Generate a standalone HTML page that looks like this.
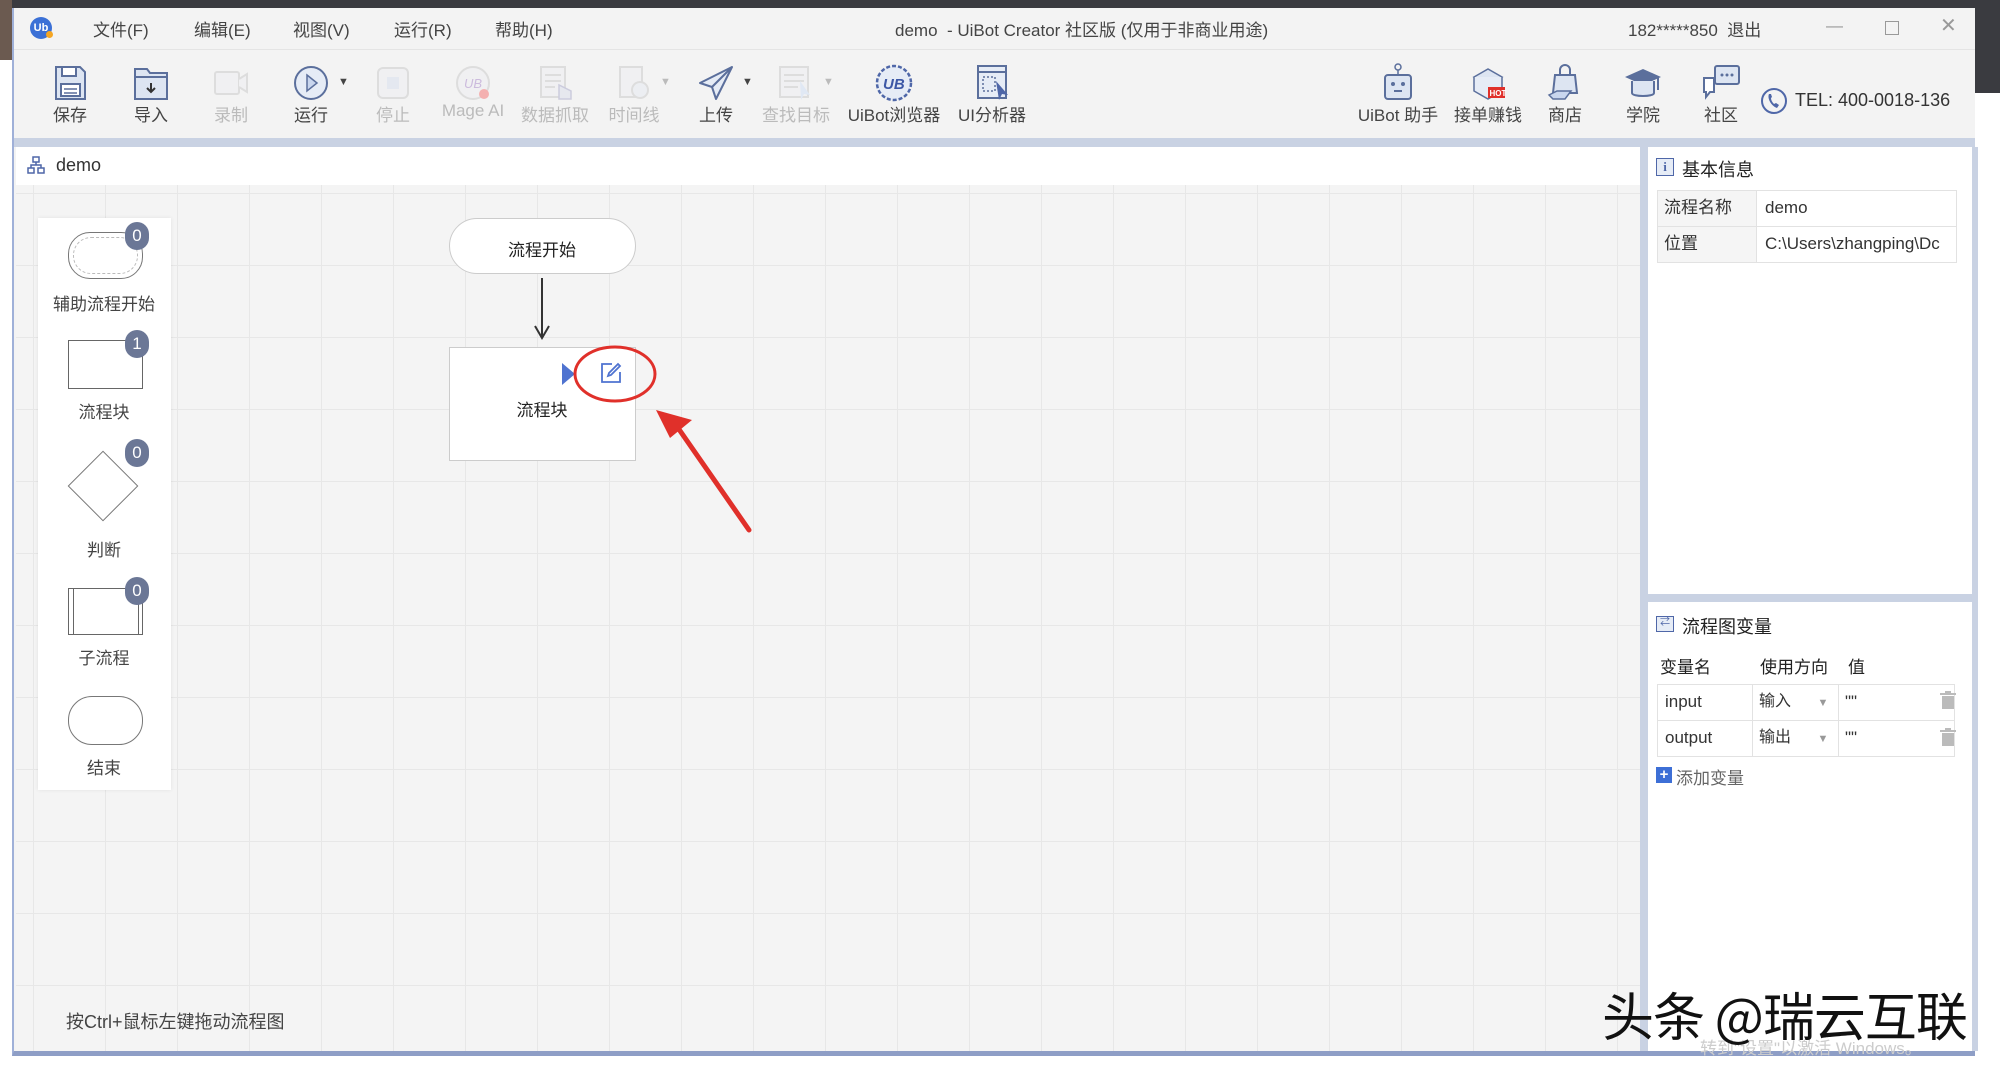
<!DOCTYPE html>
<html><head><meta charset="utf-8"><style>
*{margin:0;padding:0;box-sizing:border-box}
body{width:2000px;height:1065px;overflow:hidden;background:#fff;font-family:"Liberation Sans","Noto Sans CJK SC",sans-serif;color:#333;position:relative}
.a{position:absolute}
.t{position:absolute;white-space:nowrap}
.menu{font-size:17px;color:#444;top:16px}
.lbl{font-size:17px;top:101px;transform:translateX(-50%);color:#444}
.dis{color:#bbb}
.ic{position:absolute;top:63px;width:40px;height:40px}
.pal{font-size:17px;color:#444;transform:translateX(-50%);left:104px}
.badge{position:absolute;width:24px;height:28px;border-radius:12px;background:#6b7796;color:#fff;font-size:17px;text-align:center;line-height:28px}
.cell{position:absolute;border:1px solid #e2e2e2;font-size:17px;padding-left:6px;line-height:34px}
</style></head><body>
<div class="a" style="left:0;top:0;width:2000px;height:8px;background:#3a3b40"></div>
<div class="a" style="left:1975px;top:0;width:25px;height:93px;background:#3a3b40"></div>
<div class="a" style="left:0;top:0;width:12px;height:60px;background:#6b5a50"></div>
<div class="a" style="left:12px;top:8px;width:1963px;height:1048px;background:#f3f3f3;border-left:2px solid #9fb0d8;border-bottom:5px solid #8e9ec6"></div>
<div class="a" style="left:14px;top:8px;width:1961px;height:42px;background:#f3f3f3;border-bottom:1px solid #e4e4e4"></div>
<div class="a" style="left:30px;top:17px;width:22px;height:22px;border-radius:50%;background:#3b70d6;color:#fff;font-size:11px;font-weight:bold;text-align:center;line-height:22px">Ub</div>
<div class="a" style="left:46px;top:31px;width:7px;height:7px;border-radius:50%;background:#f5a623"></div>
<div class="t menu" style="left:93px">文件(F)</div>
<div class="t menu" style="left:194px">编辑(E)</div>
<div class="t menu" style="left:293px">视图(V)</div>
<div class="t menu" style="left:394px">运行(R)</div>
<div class="t menu" style="left:495px">帮助(H)</div>
<div class="t menu" style="left:895px">demo &nbsp;- UiBot Creator 社区版 (仅用于非商业用途)</div>
<div class="t menu" style="left:1628px">182*****850 &nbsp;退出</div>
<div class="t menu" style="left:1826px;color:#999">—</div>
<div class="a" style="left:1885px;top:21px;width:14px;height:14px;border:1px solid #999"></div>
<div class="t menu" style="left:1940px;color:#999;font-size:20px;top:13px">✕</div>
<svg class="ic" style="left:50px" viewBox="0 0 40 40"><path d="M6 4h24l5 5v27H6z" fill="#dde5f2" stroke="#5b6f9c" stroke-width="2"/><rect x="12" y="4" width="14" height="9" fill="#fff" stroke="#5b6f9c" stroke-width="2"/><rect x="11" y="21" width="19" height="12" fill="#fff" stroke="#5b6f9c" stroke-width="2"/><path d="M14 26h13M14 30h13" stroke="#5b6f9c" stroke-width="1.5"/></svg>
<svg class="ic" style="left:131px" viewBox="0 0 40 40"><path d="M4 6h12l3 4h17v26H4z" fill="#dde5f2" stroke="#5b6f9c" stroke-width="2"/><path d="M4 14h32" stroke="#5b6f9c" stroke-width="2"/><path d="M20 20v9M16 25l4 4 4-4" stroke="#333" stroke-width="2" fill="none"/></svg>
<svg class="ic" style="left:211px" viewBox="0 0 40 40"><rect x="4" y="9" width="24" height="22" rx="2" fill="#f0f0f2" stroke="#ddd" stroke-width="2"/><path d="M28 16l8-5v18l-8-5" fill="#f0f0f2" stroke="#ddd" stroke-width="2"/></svg>
<svg class="ic" style="left:291px" viewBox="0 0 40 40"><circle cx="20" cy="20" r="16" fill="#e6ecf6" stroke="#5b6f9c" stroke-width="2"/><path d="M16 12l10 8-10 8z" fill="#c9d6ee" stroke="#5b6f9c" stroke-width="1.5"/></svg>
<div class="t" style="left:338px;top:76px;font-size:11px;color:#444">▼</div>
<svg class="ic" style="left:373px" viewBox="0 0 40 40"><rect x="5" y="5" width="30" height="30" rx="5" fill="#f0f0f2" stroke="#ddd" stroke-width="2"/><rect x="14" y="14" width="12" height="12" fill="#e4e8f0"/></svg>
<svg class="ic" style="left:453px" viewBox="0 0 40 40"><circle cx="20" cy="20" r="16" fill="#f0f0f2" stroke="#ddd" stroke-width="2"/><text x="11" y="25" font-size="13" fill="#cbd" font-style="italic" font-family="Liberation Sans">UB</text><circle cx="31" cy="31" r="5" fill="#f4b0b0"/></svg>
<svg class="ic" style="left:535px" viewBox="0 0 40 40"><rect x="6" y="4" width="24" height="30" fill="#f0f0f2" stroke="#ddd" stroke-width="2"/><path d="M10 12h16M10 18h16M10 24h10" stroke="#ddd" stroke-width="2"/><path d="M24 22v14h12v-8z" fill="#e6e8ee" stroke="#ccd" stroke-width="1.5"/></svg>
<svg class="ic" style="left:614px" viewBox="0 0 40 40"><rect x="6" y="4" width="22" height="30" fill="#f0f0f2" stroke="#ddd" stroke-width="2"/><circle cx="26" cy="27" r="8" fill="#eceef2" stroke="#ddd" stroke-width="2"/></svg>
<div class="t dis" style="left:660px;top:76px;font-size:11px">▼</div>
<svg class="ic" style="left:696px" viewBox="0 0 40 40"><path d="M36 4L4 20l12 4 4 12z" fill="#e6ecf6" stroke="#5b6f9c" stroke-width="2" stroke-linejoin="round"/><path d="M36 4L16 24" stroke="#5b6f9c" stroke-width="2"/></svg>
<div class="t" style="left:742px;top:76px;font-size:11px;color:#444">▼</div>
<svg class="ic" style="left:776px" viewBox="0 0 40 40"><rect x="4" y="4" width="28" height="30" fill="#f0f0f2" stroke="#ddd" stroke-width="2"/><path d="M8 12h20M8 18h20M8 24h14" stroke="#ddd" stroke-width="2"/><path d="M24 18l10 14-6-1-3 6z" fill="#e0e8f4"/></svg>
<div class="t dis" style="left:823px;top:76px;font-size:11px">▼</div>
<svg class="ic" style="left:874px" viewBox="0 0 40 40"><circle cx="20" cy="20" r="17" fill="#e6ecf6" stroke="#4f67a8" stroke-width="2.5" stroke-dasharray="4 2"/><text x="9" y="26" font-size="15" font-weight="bold" fill="#3d58a6" font-style="italic" font-family="Liberation Sans">UB</text></svg>
<svg class="ic" style="left:974px" viewBox="0 0 40 40"><rect x="4" y="3" width="28" height="32" fill="#e6ecf6" stroke="#5b6f9c" stroke-width="2"/><path d="M4 9h28" stroke="#5b6f9c" stroke-width="2"/><rect x="9" y="14" width="12" height="14" fill="none" stroke="#5b6f9c" stroke-width="1.5" stroke-dasharray="2 2"/><path d="M22 18l12 14-6-1-3 6z" fill="#4f67a8"/></svg>
<div class="t lbl" style="left:70px">保存</div>
<div class="t lbl" style="left:151px">导入</div>
<div class="t lbl dis" style="left:231px">录制</div>
<div class="t lbl" style="left:311px">运行</div>
<div class="t lbl dis" style="left:393px">停止</div>
<div class="t lbl dis" style="left:473px">Mage AI</div>
<div class="t lbl dis" style="left:555px">数据抓取</div>
<div class="t lbl dis" style="left:634px">时间线</div>
<div class="t lbl" style="left:716px">上传</div>
<div class="t lbl dis" style="left:796px">查找目标</div>
<div class="t lbl" style="left:894px">UiBot浏览器</div>
<div class="t lbl" style="left:992px">UI分析器</div>
<svg class="ic" style="left:1378px" viewBox="0 0 40 40"><circle cx="20" cy="4" r="3" fill="none" stroke="#5b6f9c" stroke-width="1.5"/><path d="M20 7v5" stroke="#5b6f9c" stroke-width="1.5"/><rect x="7" y="12" width="26" height="24" rx="3" fill="#dde5f2" stroke="#5b6f9c" stroke-width="2"/><circle cx="15" cy="21" r="2" fill="#5b6f9c"/><circle cx="25" cy="21" r="2" fill="#5b6f9c"/><path d="M16 28h8" stroke="#5b6f9c" stroke-width="2"/></svg>
<svg class="ic" style="left:1468px" viewBox="0 0 40 40"><path d="M6 14l14-8 14 8-14 8z" fill="#dde5f2" stroke="#5b6f9c" stroke-width="1.5"/><path d="M6 14v14l14 8 14-8V14" fill="#e6ecf6" stroke="#5b6f9c" stroke-width="1.5"/><rect x="20" y="24" width="17" height="11" fill="#e0302a"/><text x="21.5" y="33" font-size="8" fill="#fff" font-weight="bold" font-family="Liberation Sans">HOT</text></svg>
<svg class="ic" style="left:1545px" viewBox="0 0 40 40"><path d="M10 12h20l2 18H8z" fill="#dde5f2" stroke="#5b6f9c" stroke-width="2"/><path d="M15 12V7a5 5 0 0 1 10 0v5" fill="none" stroke="#5b6f9c" stroke-width="2"/><path d="M4 32l8-4h14l-6 8H8z" fill="#c9d6ee" stroke="#5b6f9c" stroke-width="1.5"/></svg>
<svg class="ic" style="left:1623px" viewBox="0 0 40 40"><path d="M2 14L20 6l18 8-18 8z" fill="#5b6f9c"/><path d="M9 18v12c0 4 22 4 22 0V18" fill="#dde5f2" stroke="#5b6f9c" stroke-width="2"/><path d="M35 15v12" stroke="#5b6f9c" stroke-width="2"/></svg>
<svg class="ic" style="left:1701px" viewBox="0 0 40 40"><rect x="14" y="3" width="24" height="18" rx="2" fill="#dde5f2" stroke="#5b6f9c" stroke-width="2"/><circle cx="21" cy="12" r="1.5" fill="#5b6f9c"/><circle cx="26" cy="12" r="1.5" fill="#5b6f9c"/><circle cx="31" cy="12" r="1.5" fill="#5b6f9c"/><path d="M3 15h10v14H9l-4 5v-5H3z" fill="#fff" stroke="#5b6f9c" stroke-width="2"/></svg>
<svg class="a" style="left:1760px;top:86px" width="28" height="30" viewBox="0 0 28 30"><circle cx="14" cy="15" r="12" fill="none" stroke="#4f67a8" stroke-width="2"/><path d="M9 8c-2 4 2 12 8 14l2-3-3-2-2 1c-2-2-3-4-3-6l1-1-1-3z" fill="#4f67a8"/></svg>
<div class="t" style="left:1795px;top:90px;font-size:18px;color:#333">TEL: 400-0018-136</div>
<div class="t lbl" style="left:1398px">UiBot 助手</div>
<div class="t lbl" style="left:1488px">接单赚钱</div>
<div class="t lbl" style="left:1565px">商店</div>
<div class="t lbl" style="left:1643px">学院</div>
<div class="t lbl" style="left:1721px">社区</div>
<div class="a" style="left:14px;top:138px;width:1961px;height:9px;background:#c9d2e3"></div>
<div class="a" style="left:16px;top:147px;width:1624px;height:38px;background:#fff"></div>
<svg class="a" style="left:26px;top:155px" width="20" height="20" viewBox="0 0 20 20" fill="none" stroke="#4f67a8" stroke-width="1.5"><rect x="7" y="2" width="6" height="5"/><rect x="2" y="13" width="6" height="5"/><rect x="12" y="13" width="6" height="5"/><path d="M10 7v3M5 13v-3h10v3"/></svg>
<div class="t" style="left:56px;top:155px;font-size:18px;color:#333">demo</div>
<div class="a" style="left:16px;top:185px;width:1624px;height:866px;background-color:#f4f4f4;background-image:linear-gradient(#e7e7e7 1px,transparent 1px),linear-gradient(90deg,#e7e7e7 1px,transparent 1px);background-size:72px 72px;background-position:17px 8px"></div>
<div class="a" style="left:1640px;top:147px;width:8px;height:904px;background:#c9d2e3"></div>
<div class="a" style="left:38px;top:218px;width:133px;height:572px;background:#fff;box-shadow:0 0 4px rgba(0,0,0,.08)"></div>
<div class="a" style="left:68px;top:232px;width:75px;height:47px;border:1.5px solid #777;border-radius:22px"></div>
<div class="a" style="left:73px;top:237px;width:65px;height:37px;border:1px dashed #bbb;border-radius:18px"></div>
<div class="badge" style="left:125px;top:222px">0</div>
<div class="t pal" style="top:290px">辅助流程开始</div>
<div class="a" style="left:68px;top:340px;width:75px;height:49px;border:1.5px solid #666"></div>
<div class="badge" style="left:125px;top:330px">1</div>
<div class="t pal" style="top:398px">流程块</div>
<div class="a" style="left:78px;top:461px;width:50px;height:50px;border:1.5px solid #777;transform:rotate(45deg)"></div>
<div class="badge" style="left:125px;top:439px">0</div>
<div class="t pal" style="top:536px">判断</div>
<div class="a" style="left:68px;top:588px;width:75px;height:47px;border:1.5px solid #666"></div>
<div class="a" style="left:73px;top:588px;width:1px;height:47px;background:#666"></div>
<div class="a" style="left:138px;top:588px;width:1px;height:47px;background:#666"></div>
<div class="badge" style="left:125px;top:577px">0</div>
<div class="t pal" style="top:644px">子流程</div>
<div class="a" style="left:68px;top:696px;width:75px;height:49px;border:1.5px solid #777;border-radius:24px"></div>
<div class="t pal" style="top:754px">结束</div>
<div class="a" style="left:449px;top:218px;width:187px;height:56px;background:#fff;border:1px solid #ccc;border-radius:28px"></div>
<div class="t" style="left:542px;top:236px;transform:translateX(-50%);font-size:17px;color:#222">流程开始</div>
<svg class="a" style="left:530px;top:278px" width="24" height="64"><path d="M12 0v58M5 48l7 12 7-12" stroke="#333" stroke-width="2" fill="none"/></svg>
<div class="a" style="left:449px;top:347px;width:187px;height:114px;background:#fff;border:1px solid #ccc"></div>
<svg class="a" style="left:562px;top:363px" width="14" height="22"><path d="M0 0l13 11L0 22z" fill="#4f73d0"/></svg>
<svg class="a" style="left:600px;top:362px" width="22" height="22" viewBox="0 0 22 22" fill="none" stroke="#4f73d0" stroke-width="1.8"><path d="M12 2H2v18h18V10"/><path d="M18 2l2 2-9 9-3 1 1-3z"/></svg>
<div class="t" style="left:542px;top:396px;transform:translateX(-50%);font-size:17px;color:#222">流程块</div>
<svg class="a" style="left:560px;top:330px" width="220" height="210"><ellipse cx="55" cy="44" rx="40" ry="27" fill="none" stroke="#e0302a" stroke-width="3"/><path d="M189 200L116 95" stroke="#e0302a" stroke-width="5" stroke-linecap="round"/><path d="M96 80l36 10-22 18z" fill="#e0302a"/></svg>
<div class="t" style="left:66px;top:1008px;font-size:18px;color:#444">按Ctrl+鼠标左键拖动流程图</div>
<div class="a" style="left:1648px;top:147px;width:324px;height:447px;background:#fff"></div>
<div class="a" style="left:1648px;top:594px;width:324px;height:8px;background:#c9d2e3"></div>
<div class="a" style="left:1648px;top:602px;width:324px;height:449px;background:#fff"></div>
<div class="a" style="left:1972px;top:147px;width:6px;height:904px;background:#c9d2e3"></div>
<div class="a" style="left:1656px;top:158px;width:18px;height:18px;border:1.5px solid #4f67a8;background:#e6ecf6;color:#4f67a8;font-size:13px;text-align:center;line-height:15px;font-family:'Liberation Serif',serif;font-weight:bold">i</div>
<div class="t" style="left:1682px;top:156px;font-size:18px;color:#222">基本信息</div>
<div class="cell" style="left:1657px;top:190px;width:100px;height:37px;background:#f5f5f5">流程名称</div>
<div class="cell" style="left:1756px;top:190px;width:201px;height:37px;padding-left:8px">demo</div>
<div class="cell" style="left:1657px;top:226px;width:100px;height:37px;background:#f5f5f5">位置</div>
<div class="cell" style="left:1756px;top:226px;width:201px;height:37px;padding-left:8px;overflow:hidden">C:\Users\zhangping\Dc</div>
<div class="a" style="left:1656px;top:616px;width:18px;height:16px;border:1.5px solid #4f67a8;background:#e6ecf6;color:#4f67a8;font-size:10px;text-align:center;line-height:12px">⇄</div>
<div class="t" style="left:1682px;top:613px;font-size:18px;color:#222">流程图变量</div>
<div class="t" style="left:1660px;top:653px;font-size:17px;color:#222">变量名</div>
<div class="t" style="left:1760px;top:653px;font-size:17px;color:#222">使用方向</div>
<div class="t" style="left:1848px;top:653px;font-size:17px;color:#222">值</div>
<div class="cell" style="left:1657px;top:684px;width:96px;height:37px;padding-left:7px">input</div>
<div class="cell" style="left:1752px;top:684px;width:87px;height:37px;font-size:16px">输入 <span style="color:#999;font-size:11px;margin-left:22px">▼</span></div>
<div class="cell" style="left:1838px;top:684px;width:117px;height:37px">""</div>
<div class="cell" style="left:1657px;top:720px;width:96px;height:37px;padding-left:7px">output</div>
<div class="cell" style="left:1752px;top:720px;width:87px;height:37px;font-size:16px">输出 <span style="color:#999;font-size:11px;margin-left:22px">▼</span></div>
<div class="cell" style="left:1838px;top:720px;width:117px;height:37px">""</div>
<svg class="a" style="left:1940px;top:691px" width="16" height="18" fill="#bbb"><rect x="0" y="2" width="16" height="2"/><rect x="5" y="0" width="6" height="2"/><rect x="2" y="5" width="12" height="13"/></svg>
<svg class="a" style="left:1940px;top:728px" width="16" height="18" fill="#bbb"><rect x="0" y="2" width="16" height="2"/><rect x="5" y="0" width="6" height="2"/><rect x="2" y="5" width="12" height="13"/></svg>
<div class="a" style="left:1656px;top:767px;width:16px;height:16px;background:#3d6fd6;color:#fff;font-size:15px;font-weight:bold;text-align:center;line-height:16px">+</div>
<div class="t" style="left:1676px;top:764px;font-size:17px;color:#666">添加变量</div>
<div class="t" style="left:1700px;top:1034px;font-size:17px;color:#ccc">转到"设置"以激活 Windows。</div>
<div class="t" style="left:1602px;top:976px;font-size:52px;color:#111;font-family:'Noto Sans CJK SC',sans-serif;letter-spacing:-1px">头条 @瑞云互联</div>
</body></html>
